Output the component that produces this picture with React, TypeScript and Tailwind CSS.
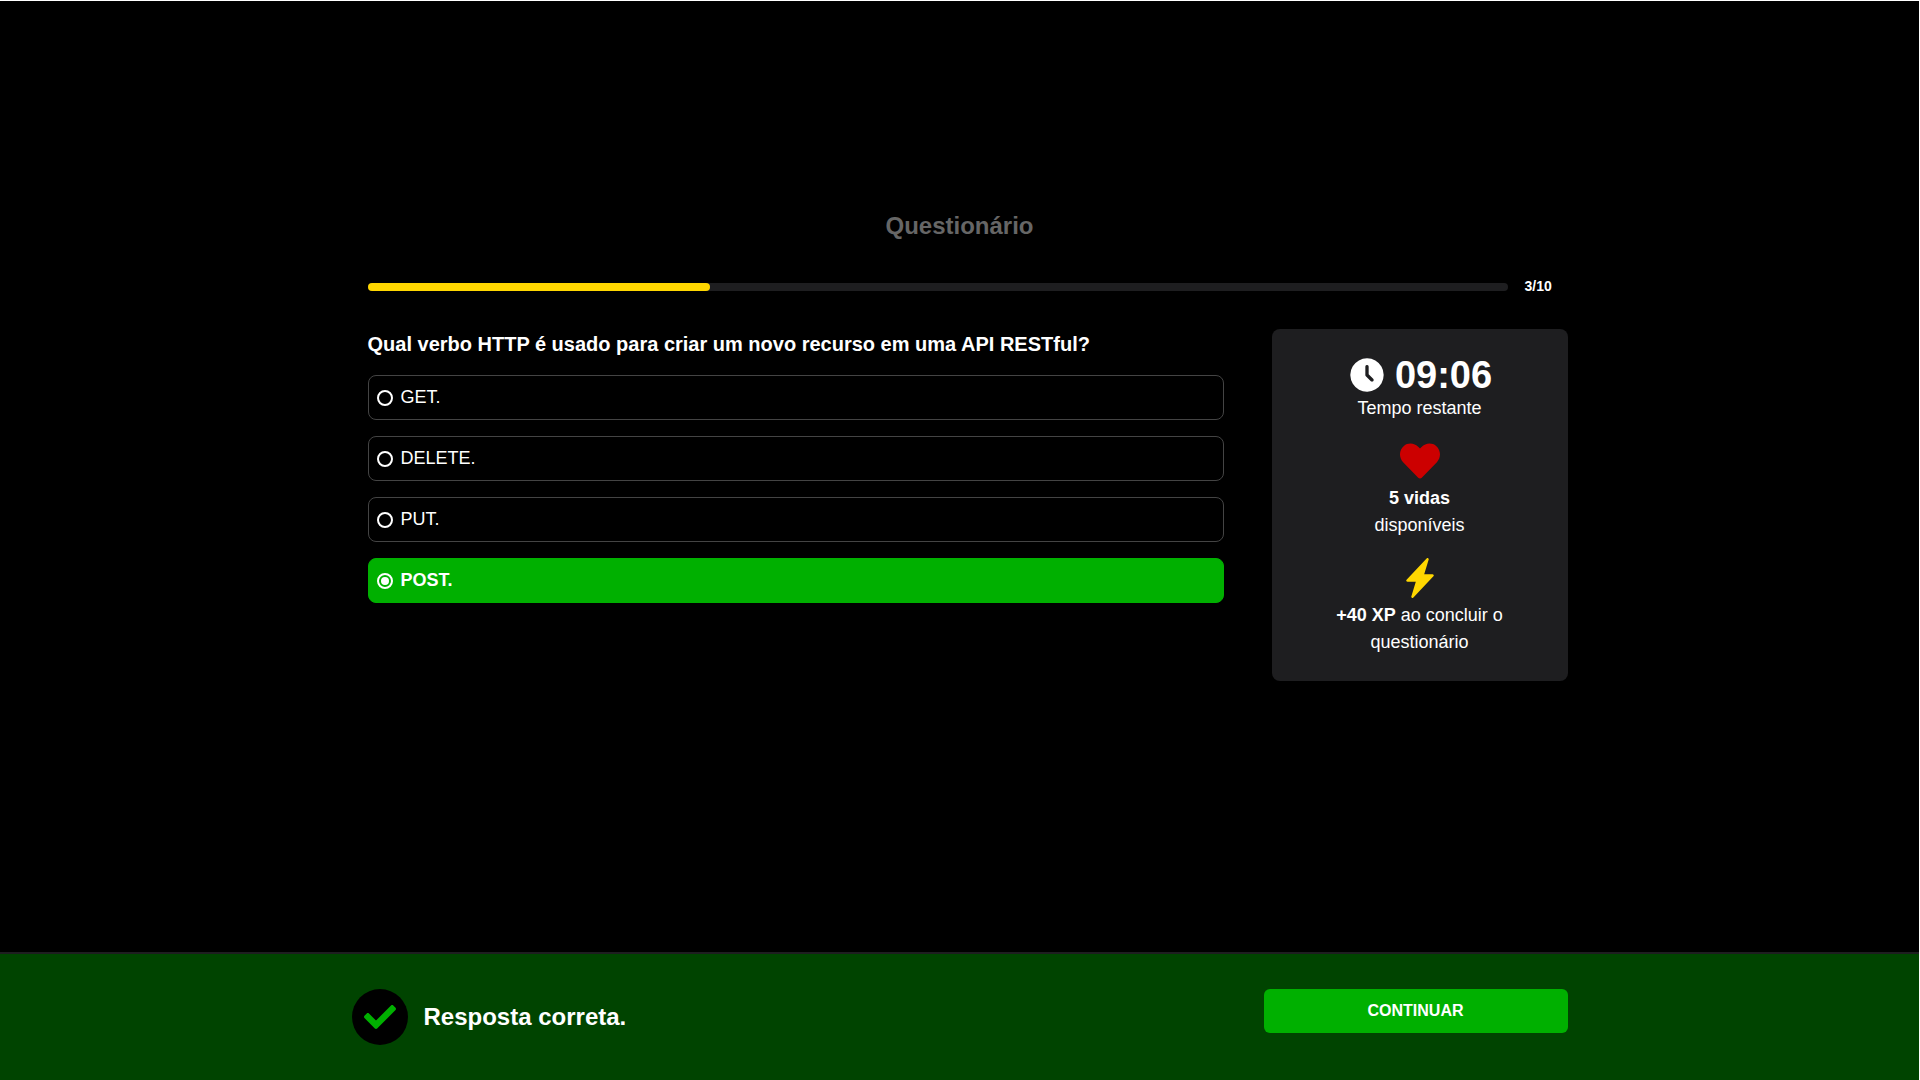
import { BsLightningChargeFill } from "react-icons/bs";
import { FaCheck, FaHeart } from "react-icons/fa";
import { TbClockFilled } from "react-icons/tb";

const options = [
  { label: "GET.", selected: false },
  { label: "DELETE.", selected: false },
  { label: "PUT.", selected: false },
  { label: "POST.", selected: true },
];

function Option({ label, selected }: { label: string; selected: boolean }) {
  return (
    <label
      className={
        "flex h-[45px] items-start gap-2 rounded-lg border pl-2 pt-2 text-lg leading-[27px] " +
        (selected ? "border-[#00b000] bg-[#00b000] font-bold" : "border-[#444444]")
      }
    >
      <span className="mt-1.5 flex size-4 items-center justify-center rounded-full border-2 border-white">
        {selected && <span className="size-2 rounded-full bg-white" />}
      </span>
      {label}
    </label>
  );
}

function StatusCard() {
  return (
    <aside className="flex h-[352px] w-[296px] flex-col items-center rounded-lg bg-[#1e1e20] pt-[26px] text-center text-lg leading-[27px]">
      <div className="flex h-10 items-center gap-2">
        <TbClockFilled size={40} />
        <span className="text-[38px] font-bold leading-10">09:06</span>
      </div>
      <p>Tempo restante</p>
      <FaHeart size={40} className="mt-[19px] text-[#cc0000]" />
      <p className="mt-1">
        <strong>5 vidas</strong>
        <br />
        disponíveis
      </p>
      <BsLightningChargeFill size={40} className="mt-[19px] text-[#ffd700]" />
      <p className="mt-1">
        <strong>+40 XP</strong> ao concluir o<br />
        questionário
      </p>
    </aside>
  );
}

export default function App() {
  return (
    <div className="flex h-[1080px] w-[1920px] flex-col border-r border-t border-white bg-black font-['Liberation_Sans',Arial,sans-serif] text-white">
      <main className="flex-1 pt-[207px]">
        <h1 className="text-center text-2xl font-bold leading-9 text-[#666666]">Questionário</h1>
        <div className="ml-[367.5px] w-[1200px]">
          <div className="mt-[33px] flex h-[19px] items-center gap-[17px]">
            <div className="h-2 w-[1140px] rounded bg-[#1e1e20]">
              <div className="h-2 w-[30%] rounded bg-[#ffd700]" />
            </div>
            <span className="text-sm font-bold leading-[19px]">3/10</span>
          </div>
          <div className="mt-[33px] flex justify-between">
            <section className="w-[856px]">
              <h2 className="text-xl font-bold leading-[30px]">
                Qual verbo HTTP é usado para criar um novo recurso em uma API RESTful?
              </h2>
              <div className="mt-4 flex flex-col gap-4">
                {options.map((option) => (
                  <Option key={option.label} {...option} />
                ))}
              </div>
            </section>
            <StatusCard />
          </div>
        </div>
      </main>
      <footer className="flex h-32 justify-between border-t-2 border-[#1e1e20] bg-[#004400] px-[351.5px] pt-[35px]">
        <div className="flex h-14 items-center gap-4">
          <span className="flex size-14 items-center justify-center rounded-full bg-black">
            <FaCheck size={32} className="text-[#00b000]" />
          </span>
          <strong className="text-2xl">Resposta correta.</strong>
        </div>
        <button className="h-11 w-[304px] rounded-md bg-[#00b000] text-base font-bold">CONTINUAR</button>
      </footer>
    </div>
  );
}
